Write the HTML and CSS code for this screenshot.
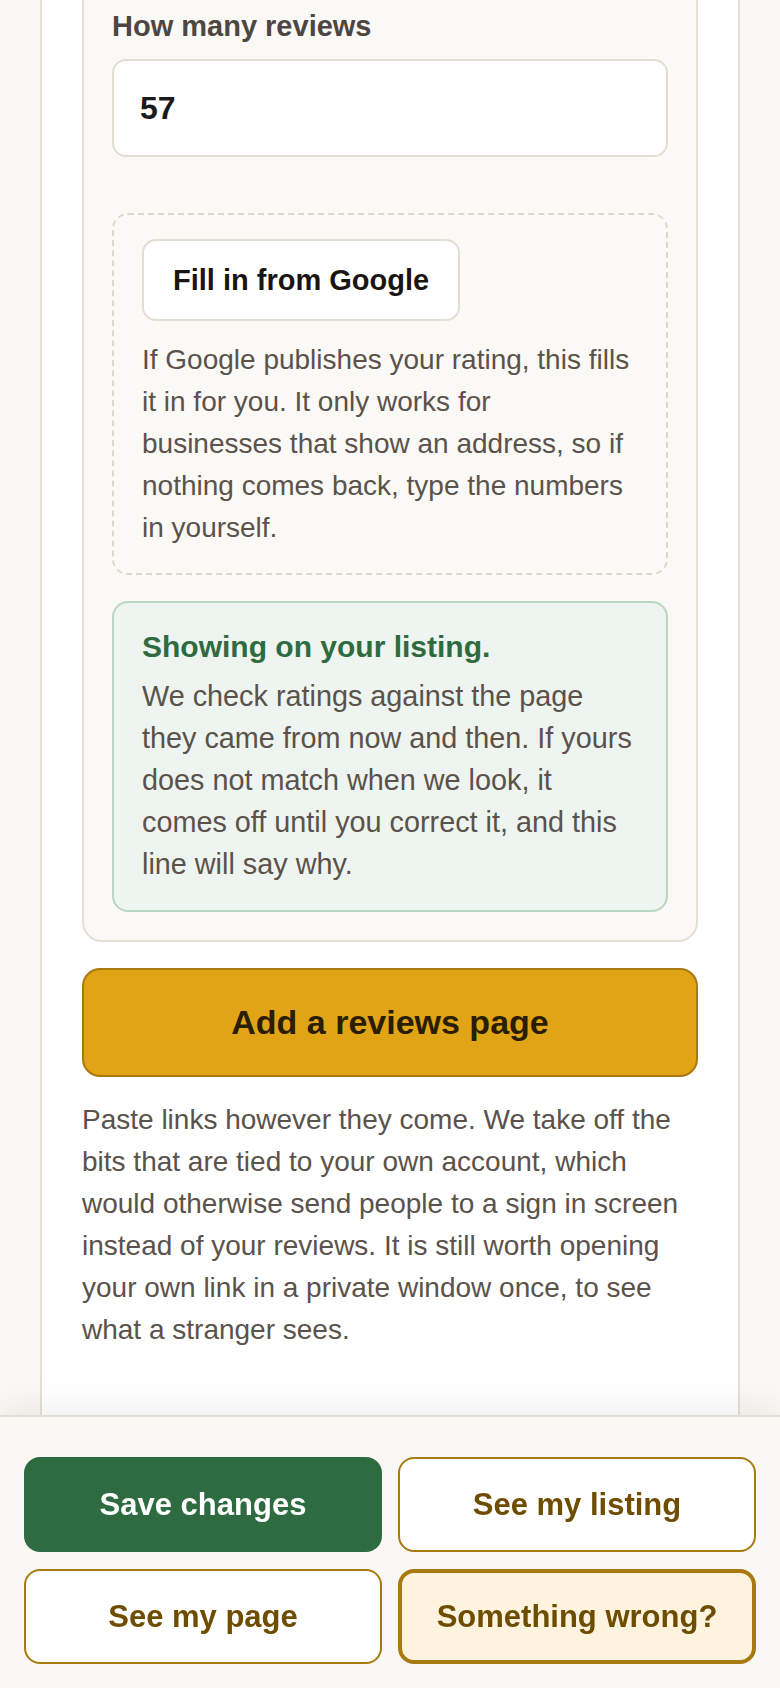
FILE: index.html
```html
<!DOCTYPE html>
<html lang="en">
<head>
<meta charset="utf-8">
<title>Reviews</title>
<link rel="stylesheet" href="styles.css">
</head>
<body>
<div class="page">
  <main class="panel">
    <section class="card">
      <label class="field-label" for="count">How many reviews</label>
      <input class="field-input" id="count" type="text" value="57">

      <div class="fetch-box">
        <button class="fetch-btn" type="button">Fill in from Google</button>
        <p class="fetch-text">If Google publishes your rating, this fills it in for you. It only works for businesses that show an address, so if nothing comes back, type the numbers in yourself.</p>
      </div>

      <div class="status-box">
        <h3 class="status-title">Showing on your listing.</h3>
        <p class="status-text">We check ratings against the page they came from now and then. If yours does not match when we look, it comes off until you correct it, and this line will say why.</p>
      </div>
    </section>

    <button class="add-btn" type="button">Add a reviews page</button>

    <p class="note">Paste links however they come. We take off the bits that are tied to your own account, which would otherwise send people to a sign in screen instead of your reviews. It is still worth opening your own link in a private window once, to see what a stranger sees.</p>
  </main>
</div>

<nav class="action-bar">
  <button class="act act-primary" type="button">Save changes</button>
  <button class="act act-outline" type="button">See my listing</button>
  <button class="act act-outline" type="button">See my page</button>
  <button class="act act-warn" type="button">Something wrong?</button>
</nav>
</body>
</html>
```

FILE: styles.css
```css
* {
  box-sizing: border-box;
}

html, body {
  margin: 0;
  padding: 0;
}

body {
  background: #f9f8f5;
  font-family: "Liberation Sans", Arial, sans-serif;
  color: #58504a;
  overflow: hidden;
}

.page {
  padding: 0 40px;
}

.panel {
  background: #ffffff;
  border-left: 2px solid #e4e0d8;
  border-right: 2px solid #e4e0d8;
  padding: 0 40px 400px;
  min-height: 1700px;
}

.card {
  margin-top: -40px;
  background: #faf9f6;
  border: 2px solid #e4e0d8;
  border-radius: 20px;
  padding: 45px 28px 28px;
}

.field-label {
  display: block;
  font-size: 29px;
  font-weight: 700;
  line-height: 38px;
  color: #4e4640;
}

.field-input {
  display: block;
  width: 100%;
  height: 98px;
  margin: 14px 0 0;
  padding: 0 26px;
  background: #ffffff;
  border: 2px solid #e2ded5;
  border-radius: 14px;
  font-family: "Liberation Sans", Arial, sans-serif;
  font-size: 32px;
  font-weight: 700;
  color: #1a1a1a;
  outline: none;
}

.fetch-box {
  margin-top: 56px;
  border: 2px dashed #ddd8ce;
  border-radius: 16px;
  padding: 24px 28px;
}

.fetch-btn {
  display: block;
  height: 82px;
  padding: 0 29px;
  background: #ffffff;
  border: 2px solid #e2ded5;
  border-radius: 14px;
  font-family: "Liberation Sans", Arial, sans-serif;
  font-size: 29px;
  font-weight: 700;
  color: #1a1510;
}

.fetch-text {
  margin: 18px 0 0;
  font-size: 28px;
  line-height: 42px;
  color: #5a524b;
}

.status-box {
  margin-top: 26px;
  background: #eef4ef;
  border: 2px solid #b9d6c2;
  border-radius: 16px;
  padding: 24px 28px 25px;
}

.status-title {
  margin: 0;
  font-size: 30px;
  line-height: 39px;
  font-weight: 700;
  color: #2e6b40;
}

.status-text {
  margin: 9px 0 0;
  font-size: 28.8px;
  line-height: 42px;
  color: #5a524b;
}

.add-btn {
  display: block;
  width: 100%;
  height: 109px;
  margin-top: 26px;
  background: #e0a416;
  border: 2px solid #a87a10;
  border-radius: 18px;
  font-family: "Liberation Sans", Arial, sans-serif;
  font-size: 34px;
  font-weight: 700;
  color: #2b1d00;
}

.note {
  margin: 22px 0 0;
  font-size: 28px;
  line-height: 42px;
  color: #5a524b;
}

.action-bar {
  position: fixed;
  left: 0;
  right: 0;
  bottom: 0;
  display: grid;
  grid-template-columns: 1fr 1fr;
  gap: 17px 16px;
  padding: 40px 24px 24px;
  background: #f9f8f5;
  border-top: 2px solid #e2ded5;
  box-shadow: 0 -10px 30px rgba(0, 0, 0, 0.06);
}

.act {
  height: 95px;
  border-radius: 16px;
  font-family: "Liberation Sans", Arial, sans-serif;
  font-size: 31px;
  font-weight: 700;
  padding: 0 10px;
}

.act-primary {
  background: #2f6b40;
  border: 2px solid #2f6b40;
  color: #ffffff;
}

.act-outline {
  background: #ffffff;
  border: 2px solid #a87a10;
  color: #6e4c00;
}

.act-warn {
  background: #fdf3de;
  border: 4px solid #a87a10;
  color: #6e4c00;
}
```
